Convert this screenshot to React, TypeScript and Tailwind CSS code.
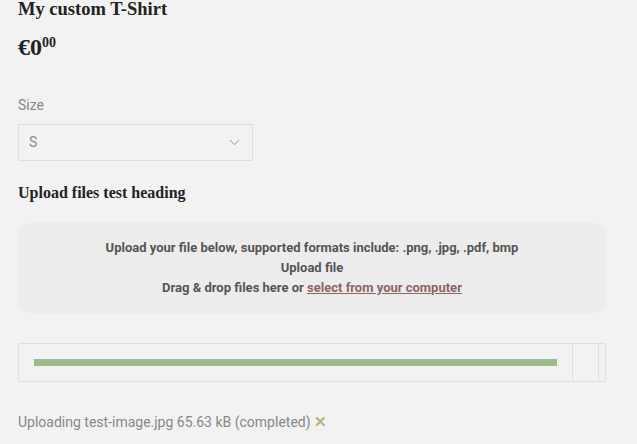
import { ChevronDown } from "lucide-react";

export default function App() {
  return (
    <div className="w-[637px] h-[444px] bg-[#f2f2f2] overflow-hidden pl-[18px] pr-[31px] font-['Roboto',sans-serif]">
      <h1 className="font-['Liberation_Serif',serif] font-bold text-[18.5px] leading-[18px] text-[#222]">
        My custom T-Shirt
      </h1>
      <div className="mt-[17px] flex items-start font-['Liberation_Serif',serif] font-bold text-[#222]">
        <span className="text-[24px] leading-[24px]">€0</span>
        <span className="mt-[1px] text-[14px] leading-[14px]">00</span>
      </div>

      <div className="mt-[37px] text-[14px] leading-[18px] text-[#888]">Size</div>
      <div className="mt-[10px] w-[235px] h-[37px] border border-[#dedede] flex items-center justify-between pl-[10px] pr-[9px] text-[14px] text-[#888]">
        <span>S</span>
        <ChevronDown size={17} strokeWidth={1.25} className="text-[#888]" />
      </div>

      <h2 className="mt-[22px] font-['Liberation_Serif',serif] font-bold text-[16px] leading-[20px] text-[#222]">
        Upload files test heading
      </h2>

      <div className="mt-[20px] h-[90px] rounded-[12px] bg-[#ececec] flex flex-col items-center justify-center text-[13px] leading-[20px] font-bold text-[#555]">
        <div>Upload your file below, supported formats include: .png, .jpg, .pdf, bmp</div>
        <div>Upload file</div>
        <div>
          Drag &amp; drop files here or{" "}
          <span className="underline text-[#8c6464]">select from your computer</span>
        </div>
      </div>

      <div className="mt-[30px] h-[39px] border border-[#dedede] flex">
        <div className="flex-1 flex items-center pl-[15px] pr-[15px]">
          <div className="h-[7px] w-full bg-[#9cbb8f]" />
        </div>
        <div className="w-[26px] border-l border-[#dedede]" />
        <div className="w-[7px] border-l border-[#dedede]" />
      </div>

      <div className="mt-[31px] text-[14px] leading-[18px] text-[#888] flex items-center">
        Uploading test-image.jpg 65.63 kB (completed)
        <span className="ml-[3px] text-[#b7b27a] text-[15px] font-bold">✕</span>
      </div>
    </div>
  );
}
